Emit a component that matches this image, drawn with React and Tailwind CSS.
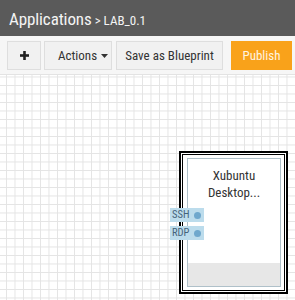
import React from 'react';

const ports = [
  { id: 'ssh', label: 'SSH', top: 'top-[55px]' },
  { id: 'rdp', label: 'RDP', top: 'top-[73px]' },
];

export default function App() {
  return (
    <div className="w-[295px] h-[300px] overflow-hidden flex flex-col bg-white font-['Roboto_Condensed','Liberation_Sans',sans-serif]">
      {/* header */}
      <header className="h-[36px] shrink-0 bg-[#5a5a5a] flex items-baseline pt-[7px] pl-[9px] text-[#f4f4f4]">
        <span className="text-[17px] tracking-[-0.1px]">Applications</span>
        <span className="text-[13px] ml-[3px]">&gt; LAB_0.1</span>
      </header>

      {/* toolbar */}
      <div className="h-[39px] shrink-0 bg-[#f6f6f6] border-b border-[#e3e3e3] flex items-start pt-[5px] pl-[7px] text-[13px] text-[#333]">
        <button className="h-[29px] w-[34px] border border-[#dedede] bg-[#f1f1f1] flex items-center justify-center">
          <svg width="9" height="9" viewBox="0 0 9 9">
            <rect x="3.2" y="0" width="2.6" height="9" fill="#222" />
            <rect x="0" y="3.2" width="9" height="2.6" fill="#222" />
          </svg>
        </button>
        <button className="h-[29px] w-[68px] ml-[3px] border border-[#dedede] bg-[#f1f1f1] flex items-center pl-[13px]">
          Actions
          <svg width="7" height="4" viewBox="0 0 7 4" className="ml-[4px]">
            <path d="M0 0h7L3.5 4z" fill="#333" />
          </svg>
        </button>
        <button className="h-[29px] w-[107px] ml-[4px] border border-[#dedede] bg-[#f1f1f1] flex items-center justify-center">
          Save as Blueprint
        </button>
        <button className="h-[29px] w-[61px] ml-[8px] border border-[#f9a21a] bg-[#f9a21a] text-[#fff4e0] flex items-center justify-center">
          Publish
        </button>
      </div>

      {/* canvas */}
      <div className="relative flex-1 bg-white bg-[linear-gradient(to_right,#e4e4e4_1px,transparent_1px),linear-gradient(to_bottom,#e4e4e4_1px,transparent_1px)] bg-[size:8.5px_8.5px] bg-[position:6px_1.5px]">
        <div className="absolute left-[179px] top-[76px] w-[109px] h-[143px] border-2 border-black bg-white p-px">
          <div className="h-full border border-black pl-[4px] pr-[3px] py-[3px]">
            <div className="h-full border border-[#afc0c9] bg-white flex flex-col">
              <div className="flex-1 pt-[8px] text-center text-[13px] leading-[17px] text-[#333]">
                <div>Xubuntu</div>
                <div>Desktop...</div>
              </div>
              <div className="h-[23px] bg-[#e7e7e7]" />
            </div>
          </div>

          {ports.map((p) => (
            <div
              key={p.id}
              className={`absolute left-[-11px] ${p.top} w-[34px] h-[14px] bg-[#bcdcec] flex items-center pl-[2px] text-[10.5px] text-[#44637a]`}
            >
              <span className="flex-1">{p.label}</span>
              <span className="w-[7px] h-[7px] rounded-full bg-[#6fa8cd] mr-[3px]" />
            </div>
          ))}
        </div>
      </div>
    </div>
  );
}
